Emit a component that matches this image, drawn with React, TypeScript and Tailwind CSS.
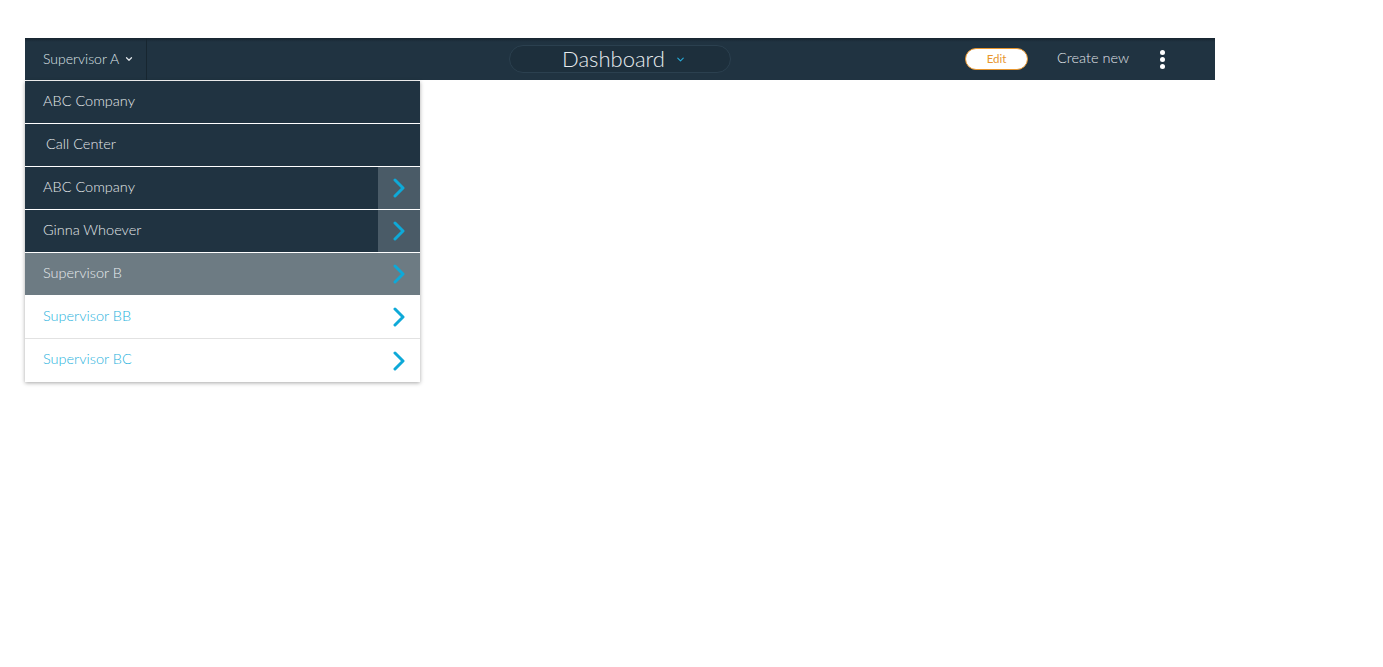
import { ChevronDown } from 'lucide-react'

const font = { fontFamily: 'Lato, "Open Sans", sans-serif' }

type Row = { label: string; tone: 'dark' | 'hover' | 'light'; arrow?: 'box' | 'plain'; indent?: boolean }

const rows: Row[] = [
  { label: 'ABC Company', tone: 'dark' },
  { label: 'Call Center', tone: 'dark', indent: true },
  { label: 'ABC Company', tone: 'dark', arrow: 'box' },
  { label: 'Ginna Whoever', tone: 'dark', arrow: 'box' },
  { label: 'Supervisor B', tone: 'hover', arrow: 'plain' },
  { label: 'Supervisor BB', tone: 'light', arrow: 'plain' },
  { label: 'Supervisor BC', tone: 'light', arrow: 'plain' },
]

function Chevron() {
  return (
    <svg width="12" height="20" viewBox="0 0 12 20" fill="none">
      <polyline points="2,2 10,10 2,18" stroke="#0ea9d8" strokeWidth="3" strokeLinecap="round" strokeLinejoin="round" />
    </svg>
  )
}

function MenuRow({ row, last }: { row: Row; last: boolean }) {
  const bg =
    row.tone === 'dark' ? 'bg-[#203341] text-[#e4e8eb]' : row.tone === 'hover' ? 'bg-[#6d7b83] text-[#e8ecee]' : 'bg-white text-[#27b2dd]'
  const border = last ? '' : row.tone === 'light' ? 'border-b border-[#e2e2e2]' : 'border-b border-white'
  return (
    <div className={`flex h-[43px] items-stretch ${bg} ${border}`}>
      <div className={`flex flex-1 items-center pb-[3px] text-[14.5px] font-light ${row.indent ? 'pl-[21px]' : 'pl-[18px]'}`}>
        {row.label}
      </div>
      {row.arrow && (
        <div className={`flex w-[42px] items-center justify-center ${row.arrow === 'box' ? 'bg-[#4a5b67]' : ''}`}>
          <Chevron />
        </div>
      )}
    </div>
  )
}

export default function App() {
  return (
    <div className="min-h-screen bg-white pl-[25px] pt-[38px]" style={font}>
      <div className="grid h-[42px] w-[1190px] grid-cols-[1fr_auto_1fr] items-center bg-[linear-gradient(#17252f,#203341_4px,#203341)] text-[#dfe4e8]">
        <div className="flex h-full">
          <div className="flex w-[122px] items-center border-r border-[#172630] pb-[2px] pl-[18px] text-[14px] font-light">
            Supervisor A
            <ChevronDown className="ml-[5px] mt-[2px] h-[10px] w-[10px]" strokeWidth={3} />
          </div>
        </div>
        <div className="flex h-[28px] w-[222px] items-center justify-center rounded-full border border-[#2b404f] bg-[#1d2f3c] pb-[2px] pl-[8px] text-[22px] font-light text-[#e8ecef]">
          Dashboard
          <ChevronDown className="ml-[10px] mt-[3px] h-[11px] w-[11px] text-[#27a9d6]" strokeWidth={2.5} />
        </div>
        <div className="flex items-center justify-end pr-[50px]">
          <button className="flex h-[22px] w-[63px] items-center justify-center rounded-full border border-[#e8962e] bg-white pb-px text-[11.5px] text-[#e8962e]">
            Edit
          </button>
          <span className="ml-[29px] pb-[2px] text-[14.5px] font-light text-[#e0e5e9]">Create new</span>
          <div className="ml-[31px] flex flex-col gap-[2px]">
            <span className="h-[5px] w-[5px] rounded-full bg-white" />
            <span className="h-[5px] w-[5px] rounded-full bg-white" />
            <span className="h-[5px] w-[5px] rounded-full bg-white" />
          </div>
        </div>
      </div>
      <div className="mt-px w-[395px] shadow-[0_1px_4px_rgba(0,0,0,0.35)]">
        {rows.map((r, i) => (
          <MenuRow key={i} row={r} last={i === rows.length - 1} />
        ))}
      </div>
    </div>
  )
}
